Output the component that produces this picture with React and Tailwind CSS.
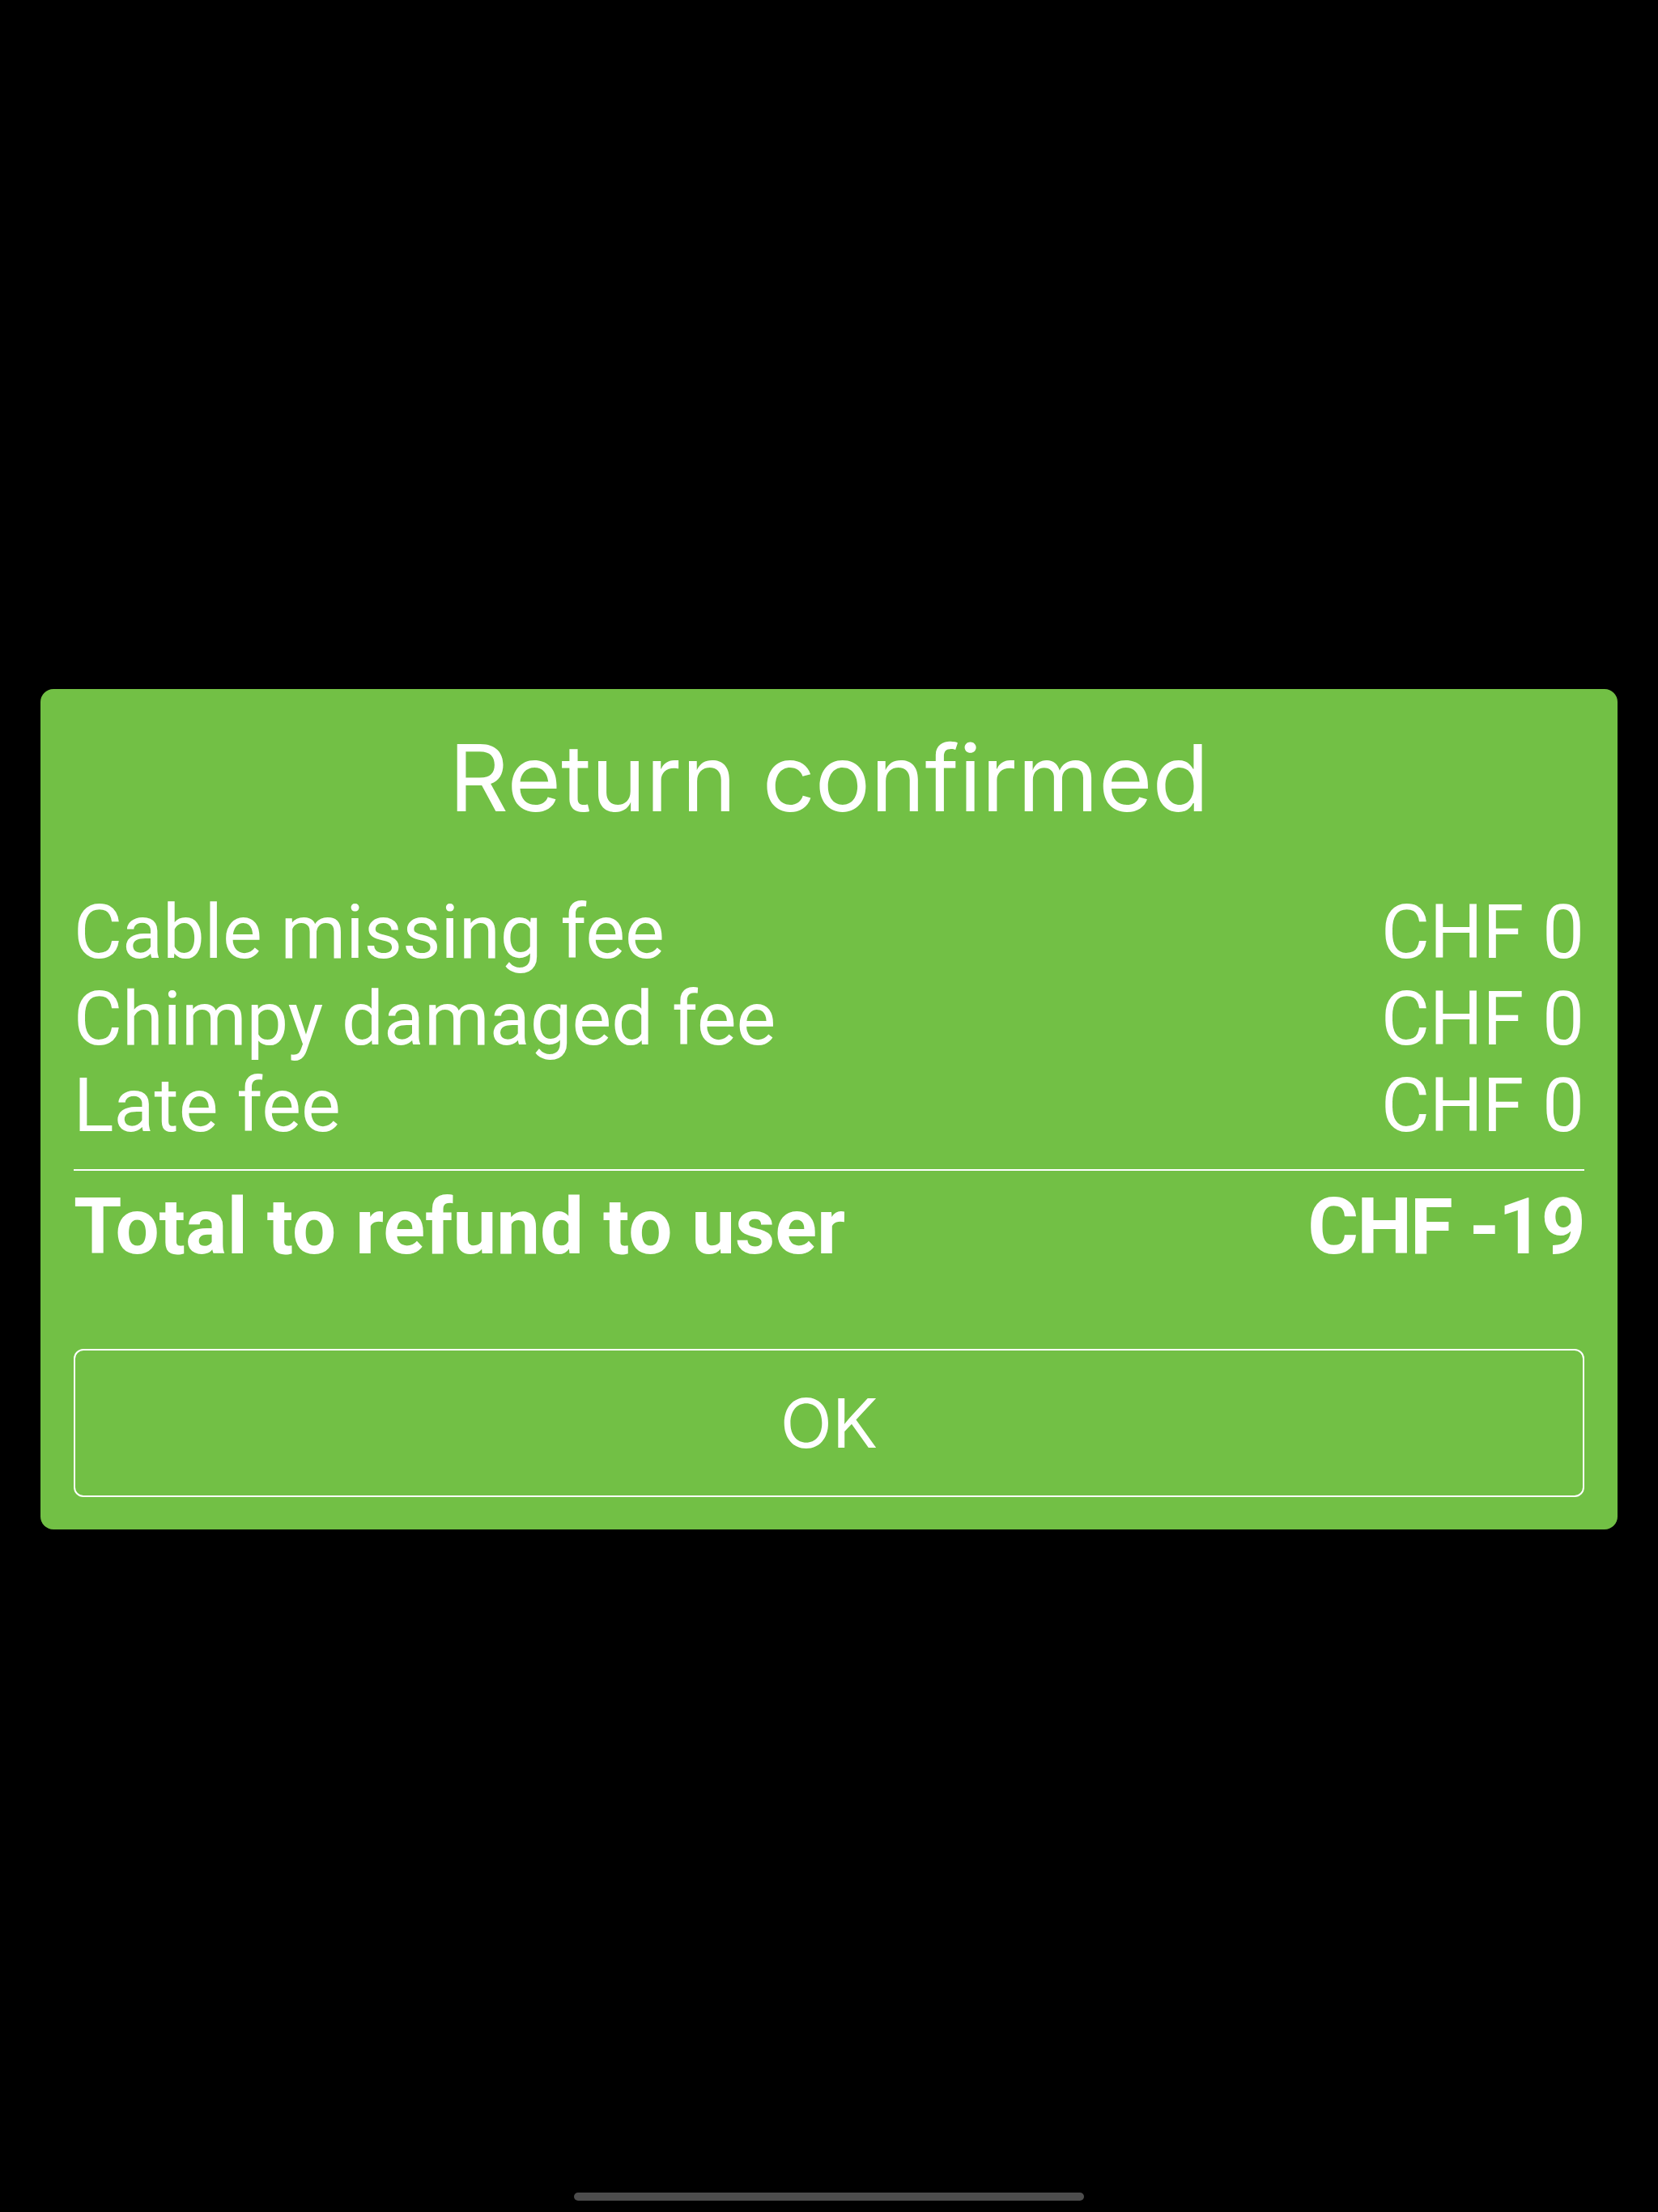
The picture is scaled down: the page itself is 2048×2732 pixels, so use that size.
export default function App() {
  const fees = [
    { label: "Cable missing fee", amount: "CHF 0" },
    { label: "Chimpy damaged fee", amount: "CHF 0" },
    { label: "Late fee", amount: "CHF 0" },
  ]

  return (
    <div
      className="flex h-[2732px] w-full flex-col bg-black text-white"
      style={{ fontFamily: "Inter, 'Noto Sans', sans-serif" }}
    >
      <div className="px-[50px] pt-[851px]">
        <div className="rounded-[16px] bg-[#72c045] px-[41px] pt-[40px] pb-[40px]">
          <h1 className="h-[140px] text-center text-[114px] leading-[140px] font-normal">
            Return confirmed
          </h1>

          <div className="mt-[67px] font-['Roboto',sans-serif]">
            {fees.map((fee) => (
              <div key={fee.label} className="flex h-[107px] items-center justify-between text-[92px] leading-none">
                <span>{fee.label}</span>
                <span>{fee.amount}</span>
              </div>
            ))}
          </div>

          <div className="mt-[25px] h-[2px] bg-white" />

          <div className="mt-[15px] flex h-[107px] items-center justify-between font-['Roboto',sans-serif] text-[96px] leading-none font-bold">
            <span>Total to refund to user</span>
            <span className="tracking-[-0.02em]">CHF -19</span>
          </div>

          <button className="mt-[98px] flex h-[183px] w-full items-center justify-center rounded-[12px] border-2 border-white text-[84px] leading-none">
            OK
          </button>
        </div>
      </div>

      <div className="mt-auto flex justify-center pb-[14px]">
        <div className="h-[10px] w-[630px] rounded-full bg-[#4d4d4d]" />
      </div>
    </div>
  )
}
